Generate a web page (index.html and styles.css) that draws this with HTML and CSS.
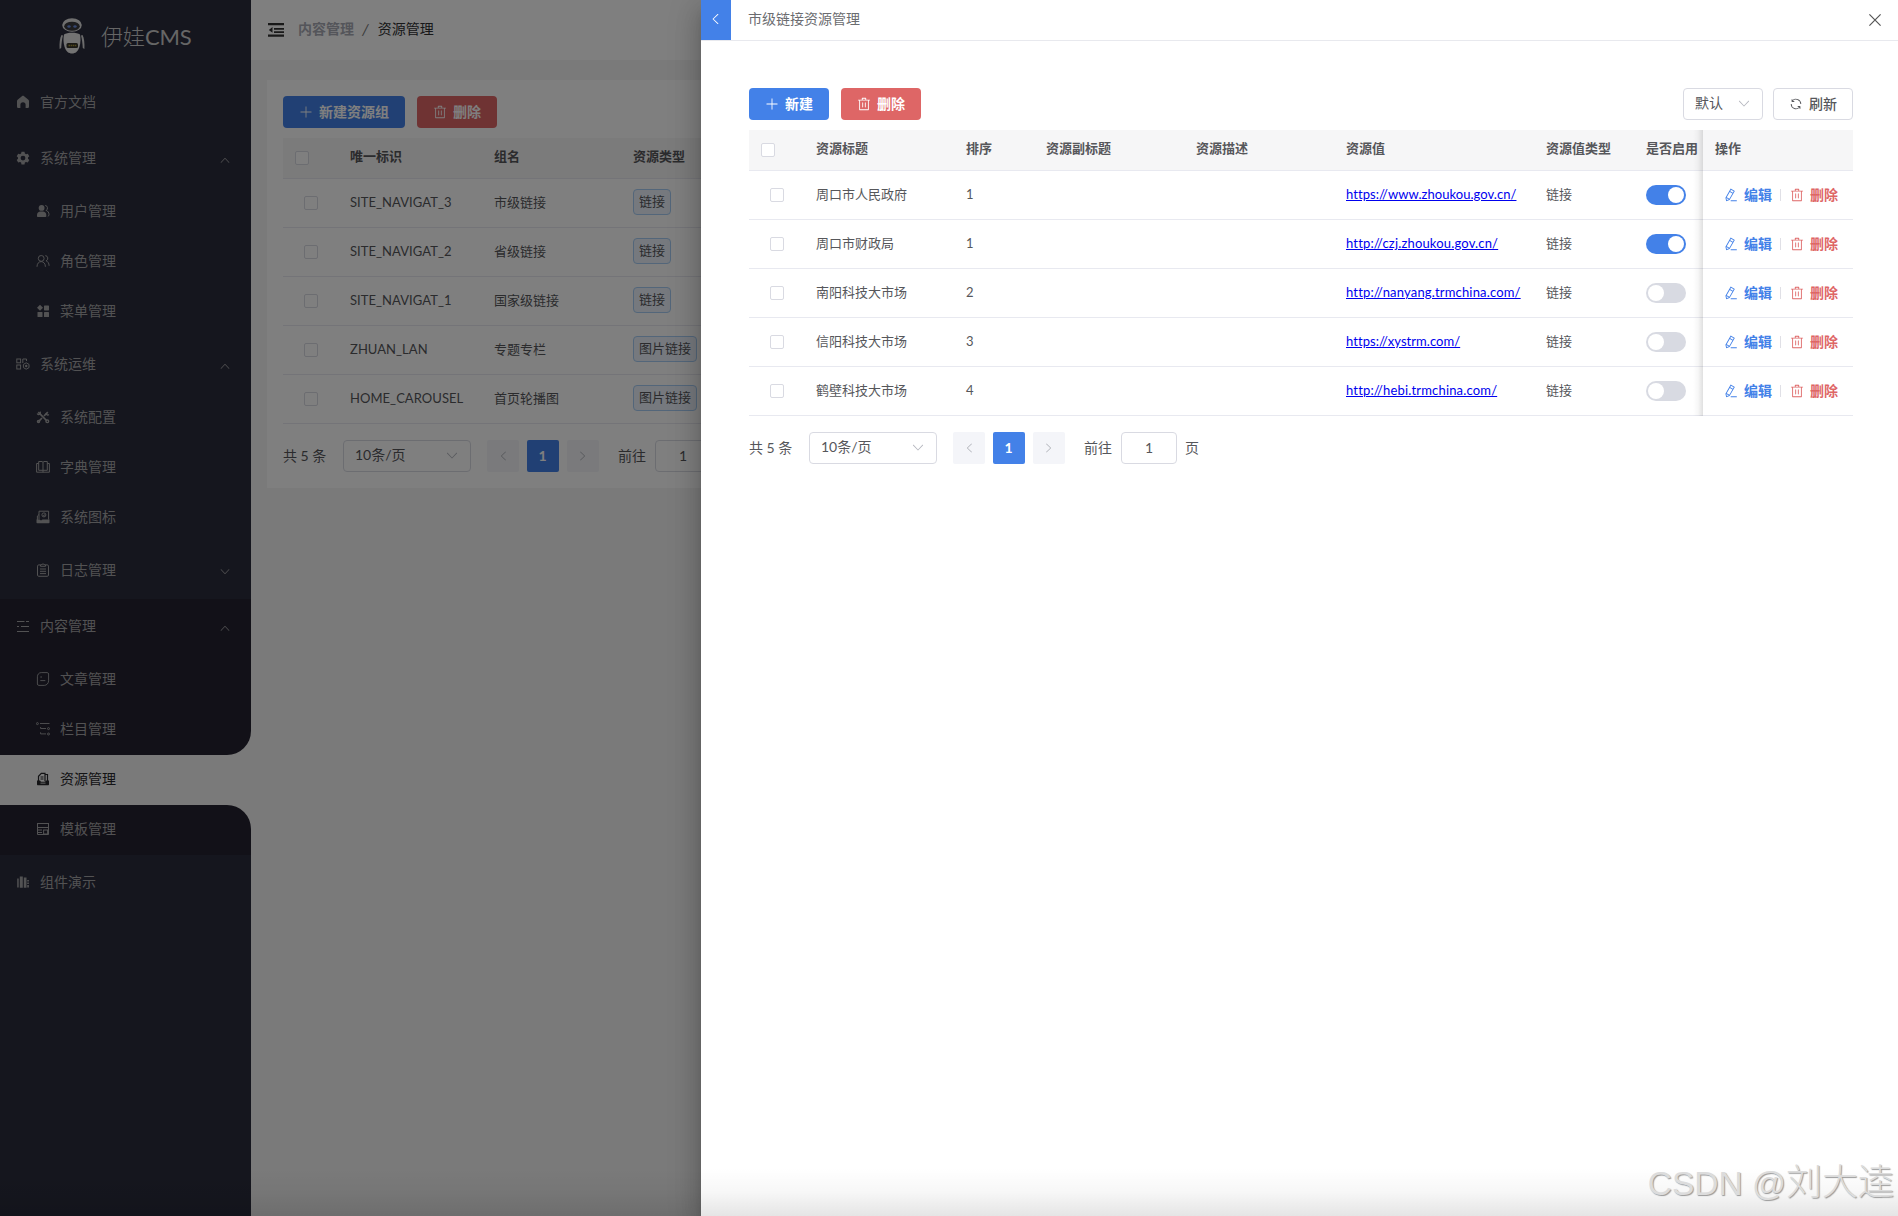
FILE: index.html
```html
<!DOCTYPE html>
<html lang="zh-CN">
<head>
<meta charset="utf-8">
<title>伊娃CMS</title>
<link rel="stylesheet" href="styles.css">
</head>
<body>
<svg class="sprite" aria-hidden="true">
  <symbol id="plus" viewBox="0 0 1024 1024"><path d="M480 480V128a32 32 0 0 1 64 0v352h352a32 32 0 1 1 0 64H544v352a32 32 0 1 1-64 0V544H128a32 32 0 0 1 0-64z"/></symbol>
  <symbol id="trash" viewBox="0 0 1024 1024"><path d="M160 256H96a32 32 0 0 1 0-64h256V95.936a32 32 0 0 1 32-32h256a32 32 0 0 1 32 32V192h256a32 32 0 1 1 0 64h-64v672a32 32 0 0 1-32 32H192a32 32 0 0 1-32-32zm448-64v-64H416v64zM224 896h576V256H224zm192-128a32 32 0 0 1-32-32V416a32 32 0 0 1 64 0v320a32 32 0 0 1-32 32m192 0a32 32 0 0 1-32-32V416a32 32 0 0 1 64 0v320a32 32 0 0 1-32 32"/></symbol>
  <symbol id="up" viewBox="0 0 1024 1024"><path d="m488.832 344.32-339.84 356.672a32 32 0 0 0 0 44.16l.384.384a29.44 29.44 0 0 0 42.688 0l320-335.872 319.872 335.872a29.44 29.44 0 0 0 42.688 0l.384-.384a32 32 0 0 0 0-44.16L535.168 344.32a32 32 0 0 0-46.336 0"/></symbol>
  <symbol id="refresh" viewBox="0 0 1024 1024"><path d="M771.776 794.88A384 384 0 0 1 128 512h64a320 320 0 0 0 555.712 216.448H654.72a32 32 0 1 1 0-64h149.056a32 32 0 0 1 32 32v148.928a32 32 0 1 1-64 0v-50.56zM276.288 295.616h92.992a32 32 0 0 1 0 64H220.16a32 32 0 0 1-32-32V178.56a32 32 0 0 1 64 0v50.56A384 384 0 0 1 896.128 512h-64a320 320 0 0 0-555.776-216.384z"/></symbol>
  <symbol id="edit" viewBox="0 0 1024 1024"><path d="m199.04 672.64 193.984 112 224-387.968-193.92-112-224 388.032zm-23.872 60.16 32.896 148.288 144.896-45.696zM455.04 229.248l193.92 112 56.704-98.112-193.984-112-56.64 98.112zM104.32 708.8l384-665.024 304.768 175.936L409.152 884.8h.064l-248.448 78.336zm384 254.272v-64h448v64z"/></symbol>
  <symbol id="home" viewBox="0 0 14 14"><path d="M7 .8c.4 0 .8.1 1.100.4l4 3.200c.6.400.9 1 .9 1.700v5.400c0 .900-.7 1.600-1.600 1.600H9.600V9.800a2.600 2.600 0 0 0-5.200 0v3.300H2.600C1.700 13.100 1 12.400 1 11.500V6.100c0-.7.300-1.300.9-1.700l4-3.200C6.200.9 6.600.8 7 .8z"/></symbol>
  <symbol id="gear" viewBox="0 0 14 14"><path fill-rule="evenodd" d="M5.500.8h3l.4 1.800 1.100.6 1.800-.5 1.500 2.600-1.300 1.200v1.200l1.300 1.200-1.500 2.600-1.800-.5-1.100.6-.4 1.800h-3l-.4-1.800-1.100-.6-1.800.5L.7 8.900 2 7.700V6.500L.7 5.300l1.500-2.600 1.800.5 1.100-.6zM7 4.700a2.400 2.400 0 1 0 0 4.800 2.400 2.400 0 0 0 0-4.800z"/></symbol>
  <symbol id="user" viewBox="0 0 14 14"><circle cx="5.600" cy="3.900" r="2.900"/><path d="M1 12.300V11c0-2 1.500-3.500 3.500-3.500h2.300c2 0 3.500 1.500 3.500 3.500v1.300c0 .4-.3.700-.7.700H1.700c-.4 0-.7-.3-.7-.7z"/><path d="M9.300 1.400a2.700 2.700 0 0 1 .8 5c1.800.6 2.900 2.200 2.900 4.100 0 1-.4 1.700-1.200 1.900" fill="none" stroke="currentColor"/></symbol>
  <symbol id="role" viewBox="0 0 14 14"><g fill="none" stroke="currentColor" stroke-width=".95"><circle cx="5.200" cy="4.400" r="2.900"/><path d="M1 12.800c0-3 1.600-5.200 4.200-5.200s4.200 2.200 4.200 5.200M9.300 1.600a2.700 2.700 0 0 1 .8 5.200c1.800.7 3 2.500 3 5"/></g></symbol>
  <symbol id="grid" viewBox="0 0 14 14"><path d="M4 .8 7 3.800 4 6.700 1 3.800z"/><rect x="8" y="1.400" width="5" height="5" rx=".6"/><rect x="1.500" y="8" width="5" height="5" rx=".6"/><rect x="8" y="8" width="5" height="5" rx=".6"/></symbol>
  <symbol id="ops" viewBox="0 0 14 14"><g fill="none" stroke="currentColor"><rect x=".8" y="2" width="3.800" height="3.800"/><rect x=".8" y="8" width="3.800" height="4"/><path d="M6.800 6V2h3.700v2"/><path d="m10.200 5.800 2.800 1.600v3.200l-2.800 1.600-2.800-1.600V7.400z"/></g><circle cx="10.200" cy="9" r="1.200"/></symbol>
  <symbol id="tools" viewBox="0 0 14 14"><path d="M2.300 2.200 11 11M11.800 2.200 8 6M6 8l-3.500 3.700" fill="none" stroke="currentColor" stroke-width="1.700"/><g fill="none" stroke="currentColor" stroke-width="1.300"><path d="M1.200 3.400C2 5.200 4.800 4.600 4.400 1.600M9.800 3.400c.4 1.600 2.200 2 3.100 1.200"/><circle cx="11.300" cy="11.300" r="1.400"/><circle cx="2.500" cy="11.500" r="1.100"/></g></symbol>
  <symbol id="book" viewBox="0 0 14 14"><g fill="none" stroke="currentColor"><path d="M2.700 1.500H6l1 .8 1-.8h3.300v8.800H2.700zM7 2.300v10M2.700 3.500H.6v8.700h12.800V3.500h-2.100"/></g></symbol>
  <symbol id="picture" viewBox="0 0 14 14"><g fill="none" stroke="currentColor"><path d="M3 9.500V1.200h9.600v8.300M3 4.500 1.400 6v4"/><circle cx="7.900" cy="4.900" r="2"/><path d="m7 5 .8.700L9 4.500"/></g><path d="M.5 9.500h3l1.500 1 1.500-1h7v2.900c0 .5-.3.800-.8.800H1.300c-.5 0-.8-.3-.8-.8z"/></symbol>
  <symbol id="clip" viewBox="0 0 14 14"><g fill="none" stroke="currentColor"><path d="M4.500 1.900H2.700c-.7 0-1.200.5-1.200 1.200v9c0 .7.500 1.200 1.200 1.200h8.600c.7 0 1.200-.5 1.200-1.200v-9c0-.7-.5-1.200-1.200-1.200H9.500"/><path d="M4.500 3.300V1.800L6 1.600 7 .7l1 .9 1.500.2v1.500zM4 6h6M4 8.300h6M4 10.600h6"/></g></symbol>
  <symbol id="list" viewBox="0 0 14 14"><path d="M1 2.500h7.500M10 2.500h3M1 7.500h2M5 7.500h8M1 12.500h12" fill="none" stroke="currentColor"/></symbol>
  <symbol id="doc" viewBox="0 0 14 14"><path d="M5.200.6h6c.8 0 1.400.6 1.400 1.400v6.800c0 2.400-1.900 4.600-4.400 4.600H2.800c-.8 0-1.400-.6-1.400-1.400V4.800C1.400 2.400 3 .6 5.200.6zM4.300 5h1.700M4.300 8.600h5" fill="none" stroke="currentColor" stroke-width=".9"/></symbol>
  <symbol id="tree" viewBox="0 0 14 14"><g fill="none" stroke="currentColor" stroke-width=".9"><circle cx="1.400" cy="1.600" r="1"/><circle cx="12.500" cy="6.600" r="1"/><circle cx="12.500" cy="12" r="1"/><path d="M4 1.500h9.500M4.600 5v1.500H10M4.600 10.300v1.600H10"/></g></symbol>
  <symbol id="resource" viewBox="0 0 14 14"><path d="M2.500 9V4.300L5.300 1.300H9v8M9 2.500h2.500V9M4.500 5h3M4.500 7h3" fill="none" stroke="currentColor" stroke-width="1.200"/><path fill-rule="evenodd" d="M1 8.500h3l1 1.300h4L10 8.500h3v3.700c0 .6-.4 1-1 1H2c-.6 0-1-.4-1-1zm3.500 2.200v.9h5v-.9z"/></symbol>
  <symbol id="template" viewBox="0 0 14 14"><g fill="none" stroke="currentColor"><rect x="1.500" y="1.500" width="11" height="4"/><path d="M1.500 5.500v7h11v-7"/><rect x="7.600" y="8" width="4" height="4"/><path d="M2 8h4M2 10.500h4"/></g></symbol>
  <symbol id="comp" viewBox="0 0 14 14"><path d="M1.200 3.500h1.500v9H1.200zM3.800 1.500h3v11.200h-3zM7.800 2.500h2.700v10.200H7.800zM11.200 5h1.700v1.500h-1.700zM11.200 7.500h1.700V9h-1.700zM11.200 10h1.700v2.500h-1.700z"/></symbol>
  <symbol id="fold" viewBox="0 0 16 14"><path d="M0 0h16v2.300H0zM6 5h10v1.800H6zM6 8.200h10V10H6zM0 11.500h16v2.300H0zM4.500 4v5.800L.8 6.900z"/></symbol>
</svg>

<div class="app">
  <aside class="side">
    <div class="logo">
      <svg class="robot" viewBox="0 0 26 36">
        <path d="M2.500 17C.8 20 .3 25 .6 31l1.600-1C2.500 26 3 21 4 17.500zM23.500 17c1.700 3 2.200 8 1.900 14l-1.600-1c-.3-4-.8-9-1.800-12.500z" fill="#d8d8d8"/>
        <path d="M5 16.500c3-2.300 13-2.300 16 0 .9 4 .6 8.500-.6 12.500-1.500 4.500-4 6.500-7.400 6.500S7.100 33.500 5.600 29C4.400 25 4.100 20.500 5 16.500z" fill="#e6e6e6"/>
        <ellipse cx="13" cy="7" rx="9.800" ry="6.800" fill="#dedede"/>
        <ellipse cx="13" cy="8.200" rx="7.800" ry="4.500" fill="#3a3a3e"/>
        <ellipse cx="10" cy="8.500" rx="1.700" ry="1.300" fill="#6c8fe0"/><ellipse cx="16" cy="8.500" rx="1.700" ry="1.300" fill="#6c8fe0"/>
        <rect x="7.500" y="25" width="11.500" height="5" rx="1.500" fill="#34332a"/><path d="M9.500 27.500h8" stroke="#a09038" stroke-width="1.500" stroke-dasharray="1.500 .6"/>
      </svg>
      <span>伊娃<em>CMS</em></span>
    </div>
    <nav>
      <div class="item"><svg><use href="#home"/></svg>官方文档</div>
      <div class="item"><svg><use href="#gear"/></svg>系统管理<svg class="arrow"><use href="#up"/></svg></div>
      <div class="item sub"><svg><use href="#user"/></svg>用户管理</div>
      <div class="item sub"><svg><use href="#role"/></svg>角色管理</div>
      <div class="item sub"><svg><use href="#grid"/></svg>菜单管理</div>
      <div class="item"><svg><use href="#ops"/></svg>系统运维<svg class="arrow"><use href="#up"/></svg></div>
      <div class="item sub"><svg><use href="#tools"/></svg>系统配置</div>
      <div class="item sub"><svg><use href="#book"/></svg>字典管理</div>
      <div class="item sub"><svg><use href="#picture"/></svg>系统图标</div>
      <div class="item sub tall"><svg><use href="#clip"/></svg>日志管理<svg class="arrow down"><use href="#up"/></svg></div>
      <div class="group">
        <div class="item"><svg><use href="#list"/></svg>内容管理<svg class="arrow"><use href="#up"/></svg></div>
        <div class="item sub"><svg><use href="#doc"/></svg>文章管理</div>
        <div class="item sub before"><svg><use href="#tree"/></svg>栏目管理</div>
        <div class="item sub active"><svg><use href="#resource"/></svg>资源管理</div>
        <div class="item sub after"><svg><use href="#template"/></svg>模板管理</div>
      </div>
      <div class="item"><svg><use href="#comp"/></svg>组件演示</div>
    </nav>
  </aside>
  <main class="main">
    <header class="top">
      <svg class="fold"><use href="#fold"/></svg>
      <b>内容管理</b><i>/</i><span>资源管理</span>
    </header>
    <section class="card">
      <div class="bar">
        <button class="btn blue"><svg><use href="#plus"/></svg>新建资源组</button>
        <button class="btn red"><svg><use href="#trash"/></svg>删除</button>
      </div>
      <table class="grid groups">
        <colgroup><col class="c-check"><col class="c-key"><col class="c-name"><col></colgroup>
        <thead><tr><th><span class="box"></span></th><th>唯一标识</th><th>组名</th><th>资源类型</th></tr></thead>
        <tbody>
          <tr><td><span class="box"></span></td><td class="lat">SITE_NAVIGAT_3</td><td>市级链接</td><td><span class="tag">链接</span></td></tr>
          <tr><td><span class="box"></span></td><td class="lat">SITE_NAVIGAT_2</td><td>省级链接</td><td><span class="tag">链接</span></td></tr>
          <tr><td><span class="box"></span></td><td class="lat">SITE_NAVIGAT_1</td><td>国家级链接</td><td><span class="tag">链接</span></td></tr>
          <tr><td><span class="box"></span></td><td class="lat">ZHUAN_LAN</td><td>专题专栏</td><td><span class="tag">图片链接</span></td></tr>
          <tr><td><span class="box"></span></td><td class="lat">HOME_CAROUSEL</td><td>首页轮播图</td><td><span class="tag">图片链接</span></td></tr>
        </tbody>
      </table>
      <div class="pager">
        <span class="total">共 5 条</span>
        <span class="select"><span>10条/页</span><svg><use href="#up"/></svg></span>
        <span class="pg"><svg class="left"><use href="#up"/></svg></span><span class="pg on">1</span><span class="pg"><svg class="right"><use href="#up"/></svg></span>
        <span class="goto">前往</span><span class="num">1</span><span>页</span>
      </div>
    </section>
  </main>
</div>

<div class="mask"></div>

<div class="drawer">
  <header class="dhead">
    <span class="back"><svg><use href="#up"/></svg></span>
    <span class="title">市级链接资源管理</span>
    <svg class="close" viewBox="0 0 12 12"><path d="M.4.400l11.200 11.200M11.600.4.4 11.600" stroke="currentColor" stroke-width="1.200" fill="none"/></svg>
  </header>
  <div class="dbody">
    <div class="bar">
      <button class="btn blue"><svg><use href="#plus"/></svg>新建</button>
      <button class="btn red"><svg><use href="#trash"/></svg>删除</button>
      <span class="select small"><span>默认</span><svg><use href="#up"/></svg></span>
      <button class="btn plain"><svg><use href="#refresh"/></svg>刷新</button>
    </div>
    <table class="grid res">
      <colgroup><col class="c-check"><col class="w150"><col class="w80"><col class="w150"><col class="w150"><col class="w200"><col class="w100"><col class="w69"><col class="w150"></colgroup>
      <thead><tr><th><span class="box"></span></th><th>资源标题</th><th>排序</th><th>资源副标题</th><th>资源描述</th><th>资源值</th><th>资源值类型</th><th>是否启用</th><th class="fixed">操作</th></tr></thead>
      <tbody>
        <tr><td><span class="box"></span></td><td>周口市人民政府</td><td>1</td><td></td><td></td><td><a class="wide" href="#">https://www.zhoukou.gov.cn/</a></td><td>链接</td><td><span class="switch on"></span></td><td class="fixed"><div class="ops"><span class="edit"><svg><use href="#edit"/></svg>编辑</span><i></i><span class="del"><svg><use href="#trash"/></svg>删除</span></div></td></tr>
        <tr><td><span class="box"></span></td><td>周口市财政局</td><td>1</td><td></td><td></td><td><a href="#">http://czj.zhoukou.gov.cn/</a></td><td>链接</td><td><span class="switch on"></span></td><td class="fixed"><div class="ops"><span class="edit"><svg><use href="#edit"/></svg>编辑</span><i></i><span class="del"><svg><use href="#trash"/></svg>删除</span></div></td></tr>
        <tr><td><span class="box"></span></td><td>南阳科技大市场</td><td>2</td><td></td><td></td><td><a href="#">http://nanyang.trmchina.com/</a></td><td>链接</td><td><span class="switch"></span></td><td class="fixed"><div class="ops"><span class="edit"><svg><use href="#edit"/></svg>编辑</span><i></i><span class="del"><svg><use href="#trash"/></svg>删除</span></div></td></tr>
        <tr><td><span class="box"></span></td><td>信阳科技大市场</td><td>3</td><td></td><td></td><td><a class="wide" href="#">https://xystrm.com/</a></td><td>链接</td><td><span class="switch"></span></td><td class="fixed"><div class="ops"><span class="edit"><svg><use href="#edit"/></svg>编辑</span><i></i><span class="del"><svg><use href="#trash"/></svg>删除</span></div></td></tr>
        <tr><td><span class="box"></span></td><td>鹤壁科技大市场</td><td>4</td><td></td><td></td><td><a href="#">http://hebi.trmchina.com/</a></td><td>链接</td><td><span class="switch"></span></td><td class="fixed"><div class="ops"><span class="edit"><svg><use href="#edit"/></svg>编辑</span><i></i><span class="del"><svg><use href="#trash"/></svg>删除</span></div></td></tr>
      </tbody>
    </table>
    <div class="pager">
      <span class="total">共 5 条</span>
      <span class="select"><span>10条/页</span><svg><use href="#up"/></svg></span>
      <span class="pg"><svg class="left"><use href="#up"/></svg></span><span class="pg on">1</span><span class="pg"><svg class="right"><use href="#up"/></svg></span>
      <span class="goto">前往</span><span class="num">1</span><span>页</span>
    </div>
  </div>
</div>
<div class="fade"></div>
<div class="mark"><span>CSDN @</span>刘大逵</div>
</body>
</html>
```
FILE: styles.css
```css
* { box-sizing: border-box; }
body { margin: 0; height: 1216px; overflow: hidden; position: relative; font: 14px/20px Lato, "Noto Sans CJK SC", sans-serif; color: #56575b; }
svg { fill: currentColor; flex: none; }
.sprite { position: absolute; width: 0; height: 0; }

.app { display: flex; height: 1216px; background: #f5f5f5; }
.side { width: 251px; background: #2a2c3c; color: #a4a4a6; flex: none; }
.logo { height: 75px; padding: 18px 0 0 59px; display: flex; gap: 16px; color: #ccc; font-size: 22px; line-height: 36px; font-weight: 300; }
.logo span { height: 36px; margin-top: 1px; }
.logo em { font-style: normal; font-weight: 400; letter-spacing: -.2px; }
.robot { width: 26px; height: 36px; }
.item { height: 56px; padding: 0 20px 3px 16px; display: flex; align-items: center; gap: 10px; }
.item svg { width: 14px; height: 14px; margin-top: 1px; }
.sub { height: 50px; padding-left: 36px; }
.tall { height: 56px; }
.item .arrow { width: 12px; height: 12px; margin: 4px 0 0 auto; }
.down { transform: rotate(180deg); }
.group { background: #f5f5f5; }
.group .item { background: #242330; }
.group .before { border-bottom-right-radius: 24px; }
.group .after { border-top-right-radius: 24px; }
.group .active { background: #f5f5f5; color: #27272b; }

.main { flex: 1; }
.top { height: 60px; background: #fff; display: flex; align-items: center; padding: 0 0 3px 17px; color: #303133; }
.fold { width: 16px; height: 14px; margin: 3px 14px 0 0; color: #333; }
.top b { color: #a9abb5; font-weight: 700; }
.top i { margin: 0 9px 0 8px; color: #777; font-size: 16px; }
.card { margin: 20px 16px 0; padding: 16px; height: 408px; background: #fff; }
.bar { display: flex; gap: 12px; margin-bottom: 10px; height: 32px; }
.btn { font: 700 14px/20px Lato, "Noto Sans CJK SC", sans-serif; height: 32px; border: 0; border-radius: 4px; padding: 0 16px 0 15px; display: flex; align-items: center; gap: 6px; color: #fff; }
.btn svg { width: 14px; height: 14px; margin-left: 1px; }
.blue { background: #4381e8; }
.red { background: #de6666; }
.plain { background: #fff; border: 1px solid #d9dae2; color: #56575b; font-weight: 500; padding: 0 15px 0 14px; margin-left: -2px; }

.grid { border-collapse: separate; border-spacing: 0; table-layout: fixed; width: 100%; font-size: 13px; line-height: 20px; }
.c-check { width: 55px; }
.c-key { width: 144px; }
.c-name { width: 139px; }
.w69 { width: 69px; }
.w80 { width: 80px; }
.w100 { width: 100px; }
.w150 { width: 150px; }
.w200 { width: 200px; }
.grid th, .grid td { text-align: left; padding: 0 0 0 12px; border-bottom: 1px solid #e8e9f0; white-space: nowrap; }
.grid th { height: 41px; background: #f6f6f7; font-weight: 700; padding-bottom: 4px; }
.grid td { height: 49px; padding-bottom: 2px; }
.box { display: block; width: 14px; height: 14px; border: 1px solid #d9dae2; border-radius: 2px; background: #fff; }
th .box { margin-top: 3px; }
td .box { margin: 2px 0 0 9px; }
.lat { letter-spacing: .05px; }
.tag { display: inline-block; vertical-align: middle; height: 26px; line-height: 22px; padding: 0 5px; border: 1px solid #a6cdf5; border-radius: 4px; background: #ecf3fd; }

.pager { display: flex; align-items: center; margin-top: 16px; height: 32px; }
.total { width: 60px; }
.select { width: 128px; height: 32px; border: 1px solid #d9dae2; border-radius: 4px; background: #fff; display: flex; align-items: center; justify-content: space-between; padding: 0 11px; margin-right: 16px; }
.select span { margin-top: -2px; }
.select svg { width: 14px; height: 14px; transform: rotate(180deg); color: #b4b6be; }
.small { width: 80px; margin: 0 0 0 auto; }
.pg { width: 32px; height: 32px; margin-right: 8px; border-radius: 2px; background: #f4f5f9; display: flex; align-items: center; justify-content: center; color: #b0b2b8; }
.pg svg { width: 12px; height: 12px; }
.left { transform: rotate(-90deg); }
.right { transform: rotate(90deg); }
.pg.on { background: #4381e8; color: #fff; font-weight: 700; padding: 0 1px 1px 0; }
.goto { margin: 0 9px 0 11px; }
.num { width: 56px; height: 32px; line-height: 30px; border: 1px solid #d9dae2; border-radius: 4px; text-align: center; margin-right: 8px; background: #fff; }

.mask { position: absolute; inset: 0; background: rgba(0, 0, 0, .5); }
.drawer { position: absolute; inset: 0 0 0 701px; background: #fff; box-shadow: 0 8px 10px -5px rgba(0, 0, 0, .2), 0 16px 24px 2px rgba(0, 0, 0, .14), 0 6px 30px 5px rgba(0, 0, 0, .12); }
.dhead { height: 41px; border-bottom: 1px solid #e8e9ee; display: flex; align-items: center; }
.back { width: 30px; height: 40px; padding: 0 2px 2px 0; background: #4381e8; color: #fff; display: flex; align-items: center; justify-content: center; }
.back svg { width: 14px; height: 14px; transform: rotate(-90deg); }
.title { margin: -2px auto 0 17px; color: #6b6c70; }
.close { width: 12px; height: 12px; margin-right: 17px; color: #555; }
.dbody { padding: 47px 45px 0 48px; }
.res a { color: #0000ee; text-decoration: underline; letter-spacing: .17px; }
.res .wide { letter-spacing: .05px; }
.switch { display: block; width: 40px; height: 20px; border-radius: 10px; background: #d8dae2; padding: 2px; margin-top: 1px; }
.switch::before { content: ""; display: block; width: 16px; height: 16px; border-radius: 50%; background: #fff; }
.switch.on { background: #4381e8; }
.switch.on::before { margin-left: auto; }
.fixed { position: relative; }
.fixed::before { content: ""; position: absolute; top: 0; bottom: -1px; left: -10px; width: 10px; background: linear-gradient(to left, rgba(0, 0, 0, .12), rgba(0, 0, 0, .03) 50%, transparent); }
.ops { display: flex; align-items: center; padding: 1px 0 0 9px; font-size: 14px; font-weight: 700; }
.ops span { display: flex; align-items: center; gap: 6px; }
.ops svg { width: 14px; height: 14px; }
.ops i { width: 1px; height: 12px; background: #e0e0e6; margin: 0 9px 0 8px; }
.edit { color: #4381e8; }
.del { color: #de6666; }

.fade { position: absolute; inset: auto 0 0; height: 48px; background: linear-gradient(to bottom, transparent, rgba(0, 0, 0, .03) 50%, rgba(0, 0, 0, .1)); }
.mark { position: absolute; right: 4px; bottom: 8px; font: 300 36px/48px "Liberation Sans", "Noto Sans CJK SC", sans-serif; color: #dcdcdc; text-shadow: 1px 1px 1px #999; white-space: nowrap; }
.mark span { font-size: 33.5px; }
```
